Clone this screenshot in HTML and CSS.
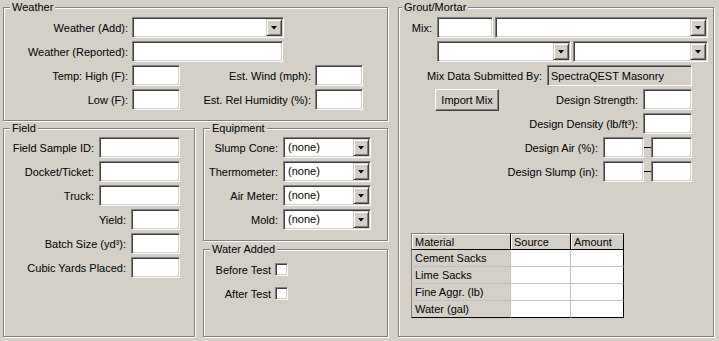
FILE: index.html
```html
<!DOCTYPE html>
<html lang="en">
<head>
    <meta charset="UTF-8">
    <title>Field Test Entry</title>
    <link rel="stylesheet" href="styles.css">
</head>
<body>
    <div class="window">
        <div class="left-col">
            <section class="group weather">
                <span class="group-title">Weather</span>
                <div class="row">
                    <label class="lbl lbl-weather">Weather (Add):</label>
                    <div class="combo combo-weather"><span class="combo-text"></span><span class="combo-btn"></span></div>
                </div>
                <div class="row">
                    <label class="lbl lbl-weather">Weather (Reported):</label>
                    <input class="tb tb-weather" type="text">
                </div>
                <div class="row">
                    <label class="lbl lbl-weather">Temp: High (F):</label>
                    <input class="tb tb-temp" type="text">
                    <label class="lbl lbl-weather2">Est. Wind (mph):</label>
                    <input class="tb tb-temp" type="text">
                </div>
                <div class="row">
                    <label class="lbl lbl-weather">Low (F):</label>
                    <input class="tb tb-temp" type="text">
                    <label class="lbl lbl-weather2">Est. Rel Humidity (%):</label>
                    <input class="tb tb-temp" type="text">
                </div>
            </section>

            <div class="lower">
                <section class="group field">
                    <span class="group-title">Field</span>
                    <div class="row row-end">
                        <label class="lbl">Field Sample ID:</label>
                        <input class="tb tb-field" type="text">
                    </div>
                    <div class="row row-end">
                        <label class="lbl">Docket/Ticket:</label>
                        <input class="tb tb-field" type="text">
                    </div>
                    <div class="row row-end">
                        <label class="lbl">Truck:</label>
                        <input class="tb tb-field" type="text">
                    </div>
                    <div class="row row-end">
                        <label class="lbl">Yield:</label>
                        <input class="tb tb-short" type="text">
                    </div>
                    <div class="row row-end">
                        <label class="lbl">Batch Size (yd³):</label>
                        <input class="tb tb-short" type="text">
                    </div>
                    <div class="row row-end">
                        <label class="lbl">Cubic Yards Placed:</label>
                        <input class="tb tb-short" type="text">
                    </div>
                </section>

                <div class="stack">
                    <section class="group equipment">
                        <span class="group-title">Equipment</span>
                        <div class="row row-end">
                            <label class="lbl">Slump Cone:</label>
                            <div class="combo combo-equip"><span class="combo-text">(none)</span><span class="combo-btn"></span></div>
                        </div>
                        <div class="row row-end">
                            <label class="lbl">Thermometer:</label>
                            <div class="combo combo-equip"><span class="combo-text">(none)</span><span class="combo-btn"></span></div>
                        </div>
                        <div class="row row-end">
                            <label class="lbl">Air Meter:</label>
                            <div class="combo combo-equip"><span class="combo-text">(none)</span><span class="combo-btn"></span></div>
                        </div>
                        <div class="row row-end">
                            <label class="lbl">Mold:</label>
                            <div class="combo combo-equip"><span class="combo-text">(none)</span><span class="combo-btn"></span></div>
                        </div>
                    </section>

                    <section class="group water">
                        <span class="group-title">Water Added</span>
                        <div class="row row-end row-check">
                            <label class="lbl">Before Test</label>
                            <input class="check" type="checkbox">
                        </div>
                        <div class="row row-end row-check">
                            <label class="lbl">After Test</label>
                            <input class="check" type="checkbox">
                        </div>
                    </section>
                </div>
            </div>
        </div>

        <section class="group grout">
            <span class="group-title">Grout/Mortar</span>
            <div class="row row-end row-tight">
                <label class="lbl lbl-mix">Mix:</label>
                <input class="tb tb-mix" type="text">
                <div class="combo combo-mix"><span class="combo-text"></span><span class="combo-btn"></span></div>
            </div>
            <div class="row row-end row-tight">
                <div class="combo combo-half"><span class="combo-text"></span><span class="combo-btn"></span></div>
                <div class="combo combo-half2"><span class="combo-text"></span><span class="combo-btn"></span></div>
            </div>
            <div class="row row-end row-inset">
                <label class="lbl">Mix Data Submitted By:</label>
                <input class="tb tb-readonly" type="text" value="SpectraQEST Masonry" readonly>
            </div>
            <div class="row row-end row-inset">
                <button class="btn" type="button">Import Mix</button>
                <label class="lbl">Design Strength:</label>
                <input class="tb tb-num" type="text">
            </div>
            <div class="row row-end row-inset">
                <label class="lbl">Design Density (lb/ft³):</label>
                <input class="tb tb-num" type="text">
            </div>
            <div class="row row-end row-inset">
                <label class="lbl">Design Air (%):</label>
                <div class="range">
                    <input class="tb tb-range" type="text">
                    <span class="dash"></span>
                    <input class="tb tb-range" type="text">
                </div>
            </div>
            <div class="row row-end row-inset">
                <label class="lbl">Design Slump (in):</label>
                <div class="range">
                    <input class="tb tb-range" type="text">
                    <span class="dash"></span>
                    <input class="tb tb-range" type="text">
                </div>
            </div>

            <table class="materials">
                <colgroup>
                    <col class="col-material">
                    <col class="col-source">
                    <col class="col-amount">
                </colgroup>
                <thead>
                    <tr><th>Material</th><th>Source</th><th>Amount</th></tr>
                </thead>
                <tbody>
                    <tr><td>Cement Sacks</td><td></td><td></td></tr>
                    <tr><td>Lime Sacks</td><td></td><td></td></tr>
                    <tr><td>Fine Aggr. (lb)</td><td></td><td></td></tr>
                    <tr><td>Water (gal)</td><td></td><td></td></tr>
                </tbody>
            </table>
        </section>
    </div>
</body>
</html>
```

FILE: styles.css
```css
* {
    margin: 0;
    padding: 0;
    box-sizing: border-box;
}

body {
    font-family: "Liberation Sans", Arial, sans-serif;
    font-size: 11px;
    color: #000;
    background: #d4d0c8;
    width: 719px;
    height: 341px;
    overflow: hidden;
}

.window {
    display: grid;
    grid-template-columns: 385px 316px;
    column-gap: 10px;
    padding: 7px 0 0 3px;
}

.left-col {
    display: flex;
    flex-direction: column;
    gap: 7px;
}

.lower {
    display: flex;
    gap: 8px;
}

.stack {
    display: flex;
    flex-direction: column;
    gap: 8px;
}

/* etched group box */
.group {
    position: relative;
    display: flex;
    flex-direction: column;
    gap: 3px;
    border: 1px solid #808080;
    box-shadow: 1px 1px 0 #fff, inset 1px 1px 0 #fff;
}

.group-title {
    position: absolute;
    top: -7px;
    left: 6px;
    padding: 0 2px;
    line-height: 13px;
    background: #d4d0c8;
}

.weather {
    height: 114px;
    padding-top: 9px;
}

.field {
    width: 192px;
    height: 209px;
    padding: 8px 14px 0 0;
}

.equipment {
    width: 185px;
    height: 113px;
    padding: 8px 16px 0 0;
}

.water {
    width: 185px;
    height: 88px;
    padding: 9px 99px 0 0;
}

.grout {
    height: 330px;
    padding: 9px 5px 0 0;
}

.grout .group-title {
    left: 3px;
}

.row {
    display: flex;
    align-items: center;
    gap: 4px;
    height: 21px;
}

.row-end {
    justify-content: flex-end;
    gap: 5px;
}

.row-check {
    gap: 4px;
}

.row-tight {
    gap: 2px;
}

.row-inset {
    padding-right: 16px;
}

.lbl {
    flex: none;
    white-space: nowrap;
}

.lbl-weather {
    width: 124px;
    text-align: right;
}

.lbl-weather2 {
    width: 127px;
    text-align: right;
}

.lbl-mix {
    margin-right: 3px;
}

/* sunken text box */
.tb {
    flex: none;
    height: 21px;
    padding: 0 3px;
    font: inherit;
    color: #000;
    background: #fff;
    border: 1px solid;
    border-color: #808080 #fff #fff #808080;
    box-shadow: inset 1px 1px 0 #404040, inset -1px -1px 0 #d4d0c8;
    outline: none;
}

.tb-weather { width: 151px; }
.tb-temp { width: 48px; }
.tb-field { width: 81px; }
.tb-short { width: 49px; }
.tb-mix { width: 56px; }
.tb-num { width: 49px; }
.tb-range { width: 41px; }

.tb-readonly {
    width: 145px;
    background: #d4d0c8;
}

.range {
    display: flex;
    align-items: center;
}

.dash {
    width: 7px;
    height: 1px;
    background: #000;
}

/* drop-down list */
.combo {
    flex: none;
    display: flex;
    height: 21px;
    padding: 1px;
    background: #fff;
    border: 1px solid;
    border-color: #808080 #fff #fff #808080;
    box-shadow: inset 1px 1px 0 #404040, inset -1px -1px 0 #d4d0c8;
}

.combo-weather { width: 152px; }
.combo-equip { width: 88px; }
.combo-mix { width: 213px; }
.combo-half { width: 134px; }
.combo-half2 { width: 135px; }

.combo-text {
    flex: 1;
    padding-left: 3px;
    line-height: 17px;
    white-space: nowrap;
    overflow: hidden;
}

.combo-btn {
    flex: none;
    display: flex;
    align-items: center;
    justify-content: center;
    width: 16px;
    height: 17px;
    background: #d4d0c8;
    border: 1px solid;
    border-color: #d4d0c8 #404040 #404040 #d4d0c8;
    box-shadow: inset 1px 1px 0 #fff, inset -1px -1px 0 #808080;
}

.combo-btn::after {
    content: '';
    width: 7px;
    height: 4px;
    background: #000;
    clip-path: polygon(0 0, 100% 0, 50% 100%);
}

.btn {
    flex: none;
    width: 64px;
    height: 22px;
    margin-left: 36px;
    margin-right: auto;
    font: inherit;
    color: #000;
    background: #d4d0c8;
    border: 1px solid;
    border-color: #fff #404040 #404040 #fff;
    box-shadow: inset -1px -1px 0 #808080;
}

.check {
    flex: none;
    appearance: none;
    width: 13px;
    height: 13px;
    background: #fff;
    border: 1px solid;
    border-color: #808080 #fff #fff #808080;
    box-shadow: inset 1px 1px 0 #404040, inset -1px -1px 0 #d4d0c8;
}

/* materials grid */
.materials {
    align-self: flex-start;
    margin: 48px 0 0 12px;
    table-layout: fixed;
    width: 213px;
    border-collapse: separate;
    border-spacing: 0;
}

.col-material { width: 100px; }
.col-source { width: 60px; }
.col-amount { width: 53px; }

.materials th,
.materials td {
    height: 17px;
    padding: 0 3px;
    text-align: left;
    font-weight: normal;
    white-space: nowrap;
}

.materials th {
    background: #d4d0c8;
    border-top: 1px solid #808080;
    border-right: 1px solid #000;
    border-bottom: 1px solid #000;
    box-shadow: inset 1px 1px 0 #fff;
}

.materials td {
    background: #fff;
    border-right: 1px solid #c0c0c0;
    border-bottom: 1px solid #c0c0c0;
}

.materials td:first-child {
    background: #d4d0c8;
}

.materials th:first-child,
.materials td:first-child {
    border-left: 1px solid #808080;
}

.materials td:last-child {
    border-right-color: #000;
}

.materials tbody tr:last-child td {
    border-bottom-color: #000;
}
```
